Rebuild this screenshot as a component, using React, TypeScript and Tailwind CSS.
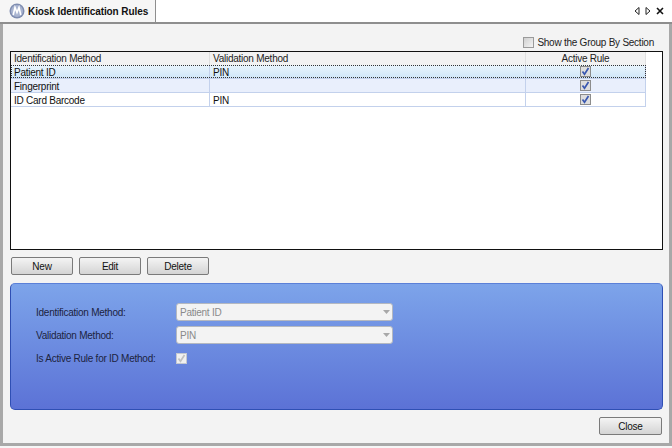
import React from "react";

const font = { fontFamily: '"Liberation Sans", Arial, sans-serif' };

function Check({ muted }: { muted?: boolean }) {
  return (
    <svg width="11" height="11" viewBox="0 0 11 11" className="block">
      <rect x="0.5" y="0.5" width="10" height="10" fill={muted ? "#f0f0f0" : "#dedede"} stroke={muted ? "#c4c8d0" : "#8c8c8c"} />
      <path d="M2.5 5.5 L4.5 8.2 L8.5 2" fill="none" stroke={muted ? "#c0c0c0" : "#3a58b0"} strokeWidth="1.7" />
    </svg>
  );
}

function Btn({ label, w = "w-[62px]" }: { label: string; w?: string }) {
  return (
    <div className={`${w} h-[18px] flex items-center justify-center rounded-[2px] border border-[#7a7a7a] bg-gradient-to-b from-[#f4f4f4] to-[#d4d4d4] text-[10px] text-[#111]`}>
      {label}
    </div>
  );
}

function Row({ a, b, cls, focus }: { a: string; b: string; cls: string; focus?: boolean }) {
  return (
    <div className={`relative flex h-[14px] w-[635px] border-b border-[#c3d1ec] text-[10px] leading-[15px] text-[#111] ${cls}`}>
      <div className="w-[199px] pl-[3px] border-r border-[#c3d1ec]">{a}</div>
      <div className="w-[316px] pl-[3px] border-r border-[#c3d1ec]">{b}</div>
      <div className="w-[120px] flex items-center justify-center border-r border-[#c3d1ec]"><Check /></div>
      {focus && <div className="absolute inset-0 border border-dotted border-[#333]" />}
    </div>
  );
}

function Field({ label, value }: { label: string; value: string }) {
  return (
    <div className="flex items-center h-[18px]">
      <div className="w-[140px] text-[10px] text-[#1c2340]">{label}</div>
      <div className="w-[217px] h-[18px] flex items-center justify-between rounded-[3px] border border-[#b4b8c0] bg-[#f3f3f3] pl-[3px] pr-[2px] text-[10px] text-[#8a8a8a]">
        <span>{value}</span>
        <svg width="7" height="4" viewBox="0 0 7 4"><path d="M0 0H7L3.5 4Z" fill="#a8a8a8" /></svg>
      </div>
    </div>
  );
}

export default function App() {
  return (
    <div style={font} className="w-[672px] h-[448px] flex flex-col overflow-hidden bg-[#f6f6f6] tracking-[-0.25px]">
      <div className="h-[24px] flex items-stretch bg-white border-b-2 border-[#8e8e8e]">
        <div className="w-[156px] flex items-center gap-[3px] pl-[9px] border-r border-[#8e8e8e] bg-[#f6f6f6]">
          <svg width="16" height="16" viewBox="0 0 16 16">
            <circle cx="8" cy="8" r="7.5" fill="#7f8db0" />
            <circle cx="8" cy="8" r="6" fill="#a9b4d0" />
            <path d="M4.2 12 L6 4.5 L8 9.5 L10 4.5 L11.8 12" fill="none" stroke="#ffffff" strokeWidth="1.6" />
          </svg>
          <span className="text-[10px] font-bold text-[#111] tracking-[-0.08px]">Kiosk Identification Rules</span>
        </div>
        <div className="flex-1" />
        <div className="flex items-center gap-[5px] pr-[8px]">
          <svg width="6" height="8" viewBox="0 0 6 8"><path d="M5 .5V7.5L1 4Z" fill="none" stroke="#222" /></svg>
          <svg width="6" height="8" viewBox="0 0 6 8"><path d="M1 .5V7.5L5 4Z" fill="none" stroke="#222" /></svg>
          <svg width="8" height="8" viewBox="0 0 8 8"><path d="M1 1L7 7M7 1L1 7" stroke="#111" strokeWidth="1.6" /></svg>
        </div>
      </div>

      <div className="flex-1 mb-[2px] flex flex-col border-l-[3px] border-r-[3px] border-b-[3px] border-[#a8a8a8] bg-[#f3f3f3] pl-[7px] pr-[6px]">
        <div className="h-[27px] flex items-center justify-end gap-[3px] pr-[9px] pt-[9px] text-[10px] text-[#222]">
          <div className="w-[11px] h-[11px] border border-[#9a9a9a] bg-gradient-to-br from-[#d0d0d0] to-[#f4f4f4]" />
          <span>Show the Group By Section</span>
        </div>

        <div className="h-[199px] border border-[#111] bg-white">
          <div className="flex h-[13px] w-[635px] bg-[#f2f2f2] text-[10px] leading-[14px] text-[#222]">
            <div className="w-[199px] pl-[3px] border-r border-[#e0e0e0]">Identification Method</div>
            <div className="w-[316px] pl-[3px] border-r border-[#e0e0e0]">Validation Method</div>
            <div className="w-[120px] text-center border-r border-[#e0e0e0]">Active Rule</div>
          </div>
          <Row a="Patient ID" b="PIN" cls="bg-gradient-to-b from-[#eaf5fd] to-[#cfe6f8]" focus />
          <Row a="Fingerprint" b="" cls="bg-[#e9effc]" />
          <Row a="ID Card Barcode" b="PIN" cls="bg-white" />
        </div>

        <div className="flex gap-[6px] pl-[1px] mt-[7px]">
          <Btn label="New" />
          <Btn label="Edit" />
          <Btn label="Delete" />
        </div>

        <div className="mt-[8px] h-[127px] rounded-[5px] border border-[#2f4fb4] border-t-[#5b80d8] bg-gradient-to-b from-[#7da4ea] to-[#5c72d6] pl-[25px] pt-[19px] flex flex-col gap-[5px]">
          <Field label="Identification Method:" value="Patient ID" />
          <Field label="Validation Method:" value="PIN" />
          <div className="flex items-center h-[18px]">
            <div className="w-[140px] text-[10px] text-[#1c2340]">Is Active Rule for ID Method:</div>
            <Check muted />
          </div>
        </div>

        <div className="flex justify-end pr-[1px] mt-[7px]">
          <Btn label="Close" w="w-[63px]" />
        </div>
      </div>
    </div>
  );
}
